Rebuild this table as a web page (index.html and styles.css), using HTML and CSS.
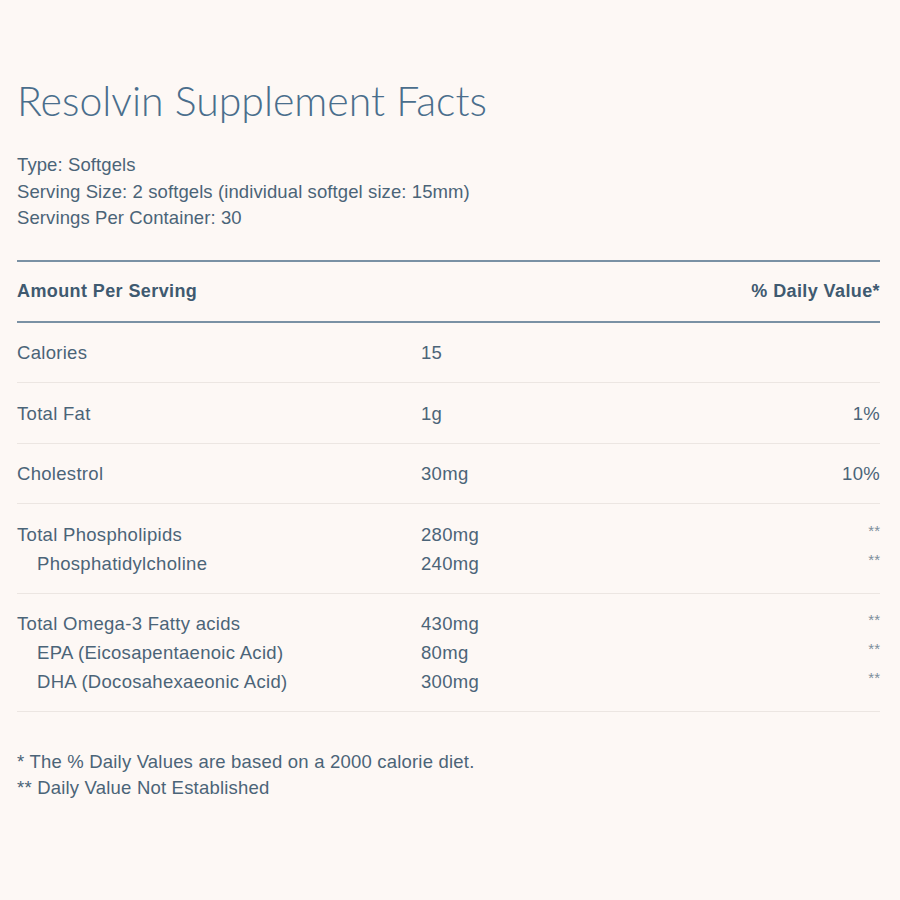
FILE: index.html
```html
<!DOCTYPE html>
<html>
<head>
<meta charset="utf-8">
<link rel="stylesheet" href="styles.css">
</head>
<body>
<div class="page">
  <h1 class="title">Resolvin Supplement Facts</h1>
  <div class="meta">
    <div>Type: Softgels</div>
    <div>Serving Size: 2 softgels (individual softgel size: 15mm)</div>
    <div>Servings Per Container: 30</div>
  </div>
  <div class="table">
    <div class="head">
      <span>Amount Per Serving</span>
      <span>% Daily Value*</span>
    </div>
    <div class="group">
      <div class="row"><span>Calories</span><span>15</span><span></span></div>
    </div>
    <div class="group">
      <div class="row"><span>Total Fat</span><span>1g</span><span>1%</span></div>
    </div>
    <div class="group">
      <div class="row"><span>Cholestrol</span><span>30mg</span><span>10%</span></div>
    </div>
    <div class="group">
      <div class="row"><span>Total Phospholipids</span><span>280mg</span><span class="ast">**</span></div>
      <div class="row sub"><span>Phosphatidylcholine</span><span>240mg</span><span class="ast">**</span></div>
    </div>
    <div class="group">
      <div class="row"><span>Total Omega-3 Fatty acids</span><span>430mg</span><span class="ast">**</span></div>
      <div class="row sub"><span>EPA (Eicosapentaenoic Acid)</span><span>80mg</span><span class="ast">**</span></div>
      <div class="row sub"><span>DHA (Docosahexaeonic Acid)</span><span>300mg</span><span class="ast">**</span></div>
    </div>
  </div>
  <div class="notes">
    <div>* The % Daily Values are based on a 2000 calorie diet.</div>
    <div>** Daily Value Not Established</div>
  </div>
</div>
</body>
</html>
```
FILE: styles.css
```css
html, body {
  margin: 0;
  padding: 0;
  background: #fdf8f5;
}
body {
  color: #44607a;
  font-family: "Liberation Sans", Arial, sans-serif;
}
.page {
  width: 863px;
  margin-left: 17px;
  padding-top: 76px;
}
.title {
  margin: 0;
  font-family: "Lato", sans-serif;
  font-weight: 300;
  font-size: 41px;
  line-height: 50px;
  color: #4a6e8c;
}
.meta {
  margin-top: 26px;
  font-size: 18.5px;
  line-height: 26.5px;
  letter-spacing: 0.1px;
  color: #4b6478;
}
.table {
  margin-top: 28px;
  border-top: 2px solid #7a91a4;
}
.head {
  display: flex;
  justify-content: space-between;
  align-items: center;
  height: 59px;
  border-bottom: 2px solid #7a91a4;
  font-size: 18px;
  font-weight: bold;
  letter-spacing: 0.4px;
  color: #3f5a70;
}
.group {
  padding: 15.5px 0 15px;
  border-bottom: 1px solid #ece6e2;
}
.row {
  display: grid;
  grid-template-columns: 404px 1fr auto;
  font-size: 18.5px;
  line-height: 29px;
  letter-spacing: 0.3px;
  color: #4b6478;
}
.row.sub span:first-child {
  padding-left: 20px;
}
.row span:last-child {
  text-align: right;
}
.ast {
  font-size: 15px;
  letter-spacing: 0;
  color: #7d8f9c;
  align-self: start;
  line-height: 22px;
}
.notes {
  margin-top: 37px;
  font-size: 18.5px;
  line-height: 25.5px;
  letter-spacing: 0.2px;
  color: #4b6478;
}
```
